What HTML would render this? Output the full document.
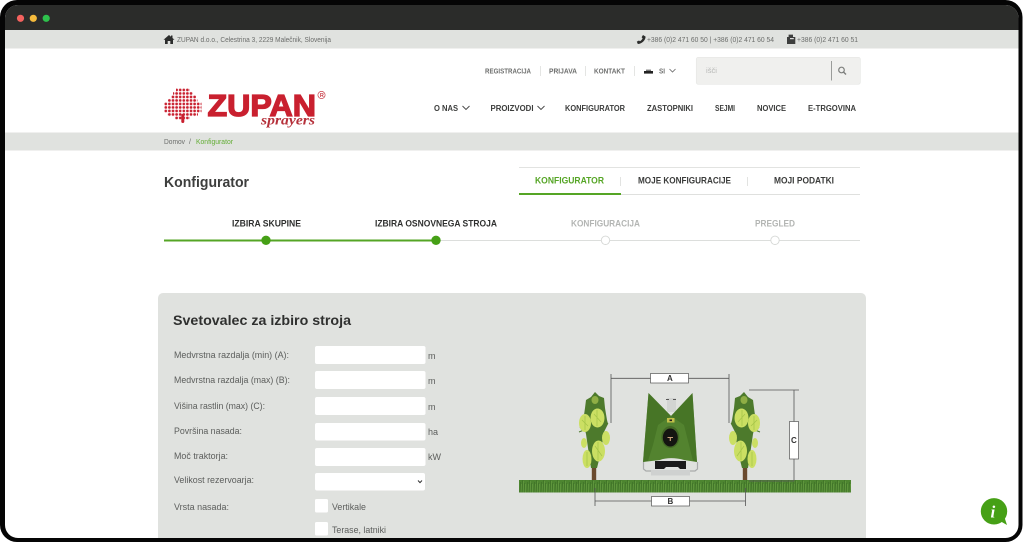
<!DOCTYPE html>
<html lang="sl">
<head>
<meta charset="utf-8">
<title>Konfigurator</title>
<style>
html,body{margin:0;padding:0;width:1024px;height:543px;overflow:hidden;background:#fff}
svg{display:block;filter:blur(.3px)}
text{font-family:"Liberation Sans",sans-serif;white-space:pre}
.t{font-size:7px;fill:#6b6d6b}
.n{font-size:7px;font-weight:bold;fill:#6e6f6e}
.m{font-size:8px;font-weight:bold;fill:#3c3d3c}
.tab{font-size:9px;font-weight:bold;fill:#3a3b3a}
.st{font-size:9px;font-weight:bold;fill:#2f302f}
.off{fill:#b3b5b3}
.l{font-size:9px;fill:#5c5e5c}
.in{fill:#fff}
</style>
</head>
<body>
<svg width="1024" height="543" viewBox="0 0 1024 543" xmlns="http://www.w3.org/2000/svg">
<defs>
<pattern id="d" x="164" y="88.2" width="3.6" height="3.5" patternUnits="userSpaceOnUse"><circle cx="1.8" cy="1.75" r="1.35" fill="#c9202f"/></pattern>
<pattern id="grass" x="519" y="479" width="7" height="14" patternUnits="userSpaceOnUse">
<rect width="7" height="14" fill="#4d8530"/>
<path d="M1 14L1.5 3M3 14L3.5 1M5 14L5.5 4" stroke="#3d6f26" stroke-width=".7"/>
<path d="M2 14L2.3 5M4.2 14L4.5 2M6.3 14L6.5 5" stroke="#69a044" stroke-width=".6"/>
</pattern>
<clipPath id="screen"><rect x="5" y="5" width="1013.5" height="533" rx="13"/></clipPath>
<g id="tree">
<rect x="-2.2" y="70" width="4.4" height="18" fill="#6a4a2e"/>
<path d="M1 0L5 4L10 6L11 16L13 28L14 32L10 40L7 60L3 76H-3L-6 56L-8 42L-11 30L-9 16L-8 8L-3 5Z" fill="#4d7a2c"/>
<path d="M-14 36L-8 30M14 32L9 26M-15 40L-10 38" stroke="#4d7a2c" stroke-width="1"/>
<ellipse cx="1" cy="8" rx="3.5" ry="4" fill="#8fae45"/>
<ellipse cx="-9" cy="31" rx="6" ry="9" fill="#cbdf63"/>
<ellipse cx="3.5" cy="26" rx="7" ry="9.5" fill="#cbdf63"/>
<ellipse cx="12" cy="46" rx="4" ry="7" fill="#cbdf63"/>
<ellipse cx="-10" cy="51" rx="3" ry="5" fill="#cbdf63"/>
<ellipse cx="4.5" cy="59" rx="6.5" ry="10.5" fill="#cbdf63"/>
<ellipse cx="-7" cy="67" rx="4.5" ry="9" fill="#cbdf63"/>
<path d="M-9 24V38M-12 28L-6 34M3 18V34M0 22L7 30M4 50V68M1 54L8 64M-7 60V74" stroke="#a7c64a" stroke-width=".8" fill="none"/>
</g>
</defs>

<!-- frame -->
<rect x="0" y="0" width="1022.5" height="542" rx="17" fill="#050505"/>
<g clip-path="url(#screen)">
<rect x="0" y="0" width="1024" height="543" fill="#fff"/>
<rect x="0" y="5" width="1024" height="25" fill="#2b2c2a"/>
<circle cx="20.5" cy="18.3" r="3.6" fill="#f4625e"/>
<circle cx="33.3" cy="18.3" r="3.6" fill="#f6bb3c"/>
<circle cx="46.2" cy="18.3" r="3.6" fill="#2ec24c"/>

<!-- top info bar -->
<rect x="0" y="30" width="1024" height="18.5" fill="#e0e2df"/>
<path d="M163.5 39.8L169 35L171 36.7V35.5H172.5V38L174.5 39.8H173V44H170.3V41H167.7V44H165V39.8Z" fill="#2c2d2c"/>
<text class="t" x="177" y="42" textLength="154" lengthAdjust="spacingAndGlyphs">ZUPAN d.o.o., Celestrina 3, 2229 Malečnik, Slovenija</text>
<path d="M643 35L645.6 36.6C645.6 40.4 641.5 44 637.8 44L636.8 41.6L639 40.5L640 41.3C641.2 40.6 642.2 39.4 642.6 38.3L641.6 37.2Z" fill="#2c2d2c"/>
<text class="t" x="647" y="42" textLength="127" lengthAdjust="spacingAndGlyphs">+386 (0)2 471 60 50 | +386 (0)2 471 60 54</text>
<path d="M787 37H788.6V34.6H793V37H795.3V44H787Z" fill="#3d3e3d"/>
<rect x="790" y="38" width="3.8" height="1.2" fill="#ddd"/>
<text class="t" x="797" y="42" textLength="61" lengthAdjust="spacingAndGlyphs">+386 (0)2 471 60 51</text>

<!-- top links -->
<text class="n" x="485" y="73.5" textLength="46" lengthAdjust="spacingAndGlyphs">REGISTRACIJA</text>
<rect x="540" y="66" width="1" height="10" fill="#e4e5e3"/>
<text class="n" x="549" y="73.5" textLength="28" lengthAdjust="spacingAndGlyphs">PRIJAVA</text>
<rect x="585" y="66" width="1" height="10" fill="#e4e5e3"/>
<text class="n" x="594" y="73.5" textLength="31" lengthAdjust="spacingAndGlyphs">KONTAKT</text>
<rect x="634" y="66" width="1" height="10" fill="#e4e5e3"/>
<rect x="644" y="71" width="9" height="2.6" fill="#222"/>
<rect x="646" y="69.6" width="5" height="1.4" fill="#777"/>
<text class="n" x="659" y="73.5" textLength="6" lengthAdjust="spacingAndGlyphs">SI</text>
<path d="M669.5 69L672.5 72L675.5 69" fill="none" stroke="#666" stroke-width=".8"/>

<!-- search -->
<rect x="696.3" y="57.3" width="164" height="27" rx="2" fill="#f0f0ee" stroke="#e6e7e5" stroke-width=".7"/>
<text x="706" y="73" font-size="7" fill="#b8b9b7" textLength="11" lengthAdjust="spacingAndGlyphs">išči</text>
<rect x="831" y="61" width="1" height="19.5" fill="#9a9c9a"/>
<circle cx="841.5" cy="70" r="2.8" fill="none" stroke="#7c7e7c" stroke-width="1.2"/>
<path d="M843.6 72.1L846 74.5" stroke="#7c7e7c" stroke-width="1.4"/>

<!-- logo -->
<path d="M176 88.2H190V91.7H193V95.2H196V98.7H197.5V102.2H201.5V112.7H198V116.2H190V119.7H175V116.2H167V112.7H164V102.2H168V98.7H171V95.2H173V91.7H176Z" fill="url(#d)"/>
<rect x="181.3" y="114" width="3" height="9" rx="1.2" fill="#c9202f"/>
<text x="207.5" y="116" font-size="31" font-weight="bold" fill="#c9202f" stroke="#c9202f" stroke-width="1.3" textLength="108.5" lengthAdjust="spacingAndGlyphs">ZUPAN</text>
<text x="261" y="124.5" font-size="13.5" font-weight="bold" font-style="italic" fill="#b5303a" style="font-family:'Liberation Serif',serif" textLength="54" lengthAdjust="spacingAndGlyphs">sprayers</text>
<circle cx="321.5" cy="95" r="3.6" fill="none" stroke="#c9404a" stroke-width=".7"/>
<text x="319.9" y="97.2" font-size="5.5" font-weight="bold" fill="#c9404a">R</text>

<!-- main nav -->
<text class="m" x="434" y="111" textLength="24" lengthAdjust="spacingAndGlyphs">O NAS</text>
<path d="M462.5 106L466 109.5L469.5 106" fill="none" stroke="#444" stroke-width=".9"/>
<text class="m" x="490.5" y="111" textLength="43" lengthAdjust="spacingAndGlyphs">PROIZVODI</text>
<path d="M537.5 106L541 109.5L544.5 106" fill="none" stroke="#444" stroke-width=".9"/>
<text class="m" x="565" y="111" textLength="60" lengthAdjust="spacingAndGlyphs">KONFIGURATOR</text>
<text class="m" x="647" y="111" textLength="46" lengthAdjust="spacingAndGlyphs">ZASTOPNIKI</text>
<text class="m" x="715" y="111" textLength="20" lengthAdjust="spacingAndGlyphs">SEJMI</text>
<text class="m" x="757" y="111" textLength="29" lengthAdjust="spacingAndGlyphs">NOVICE</text>
<text class="m" x="808" y="111" textLength="48" lengthAdjust="spacingAndGlyphs">E-TRGOVINA</text>

<!-- breadcrumb -->
<rect x="0" y="132.5" width="1024" height="18" fill="#e0e2df"/>
<text class="t" x="164" y="144" textLength="21" lengthAdjust="spacingAndGlyphs">Domov</text>
<text class="t" x="189" y="144">/</text>
<text x="196" y="144" font-size="7" fill="#63ad35" textLength="37" lengthAdjust="spacingAndGlyphs">Konfigurator</text>

<!-- title + tabs -->
<text x="164" y="187" font-size="14.5" font-weight="bold" fill="#3d3e3d" textLength="85" lengthAdjust="spacingAndGlyphs">Konfigurator</text>
<rect x="519" y="167" width="341" height="1" fill="#e2e3e1"/>
<rect x="519" y="194" width="341" height="1" fill="#dfe0de"/>
<rect x="519" y="193" width="102" height="2" fill="#55a525"/>
<text class="tab" x="535" y="183.5" style="fill:#55a525" textLength="69" lengthAdjust="spacingAndGlyphs">KONFIGURATOR</text>
<rect x="620" y="177" width="1" height="9" fill="#e2e3e1"/>
<text class="tab" x="638" y="183.5" textLength="93" lengthAdjust="spacingAndGlyphs">MOJE KONFIGURACIJE</text>
<rect x="747" y="177" width="1" height="9" fill="#e2e3e1"/>
<text class="tab" x="774" y="183.5" textLength="60" lengthAdjust="spacingAndGlyphs">MOJI PODATKI</text>

<!-- steps -->
<text class="st" x="232" y="226.3" textLength="69" lengthAdjust="spacingAndGlyphs">IZBIRA SKUPINE</text>
<text class="st" x="375" y="226.3" textLength="122" lengthAdjust="spacingAndGlyphs">IZBIRA OSNOVNEGA STROJA</text>
<text class="st off" x="571" y="226.3" textLength="69" lengthAdjust="spacingAndGlyphs">KONFIGURACIJA</text>
<text class="st off" x="755" y="226.3" textLength="40" lengthAdjust="spacingAndGlyphs">PREGLED</text>
<rect x="436" y="240" width="424" height="1" fill="#dcdedc"/>
<rect x="164" y="239.5" width="272" height="2" fill="#55a525"/>
<circle cx="266" cy="240.3" r="4.7" fill="#46a016"/>
<circle cx="436" cy="240.3" r="4.7" fill="#46a016"/>
<circle cx="605.5" cy="240.3" r="4.2" fill="#fff" stroke="#d5d7d5" stroke-width=".9"/>
<circle cx="775" cy="240.3" r="4.2" fill="#fff" stroke="#d5d7d5" stroke-width=".9"/>

<!-- panel -->
<rect x="158" y="293" width="708" height="260" rx="5" fill="#e0e2df"/>
<text x="173" y="325" font-size="14" font-weight="bold" fill="#2f302f" textLength="178" lengthAdjust="spacingAndGlyphs">Svetovalec za izbiro stroja</text>

<text class="l" x="174" y="358" textLength="115" lengthAdjust="spacingAndGlyphs">Medvrstna razdalja (min) (A):</text>
<text class="l" x="174" y="383" textLength="116" lengthAdjust="spacingAndGlyphs">Medvrstna razdalja (max) (B):</text>
<text class="l" x="174" y="409" textLength="91" lengthAdjust="spacingAndGlyphs">Višina rastlin (max) (C):</text>
<text class="l" x="174" y="434" textLength="68" lengthAdjust="spacingAndGlyphs">Površina nasada:</text>
<text class="l" x="174" y="459" textLength="54" lengthAdjust="spacingAndGlyphs">Moč traktorja:</text>
<text class="l" x="174" y="483" textLength="80" lengthAdjust="spacingAndGlyphs">Velikost rezervoarja:</text>
<text class="l" x="174" y="510" textLength="55" lengthAdjust="spacingAndGlyphs">Vrsta nasada:</text>

<rect class="in" x="315" y="346" width="110.5" height="18" rx="2"/>
<rect class="in" x="315" y="371" width="110.5" height="18" rx="2"/>
<rect class="in" x="315" y="397" width="110.5" height="18" rx="2"/>
<rect class="in" x="315" y="423" width="110.5" height="17.5" rx="2"/>
<rect class="in" x="315" y="448" width="110.5" height="18" rx="2"/>
<rect class="in" x="315" y="473" width="110" height="17.5" rx="2"/>
<path d="M418 480.5L420 482.6L422 480.5" fill="none" stroke="#333" stroke-width="1"/>
<text class="l" x="428" y="359">m</text>
<text class="l" x="428" y="384">m</text>
<text class="l" x="428" y="410">m</text>
<text class="l" x="428" y="435">ha</text>
<text class="l" x="428" y="460">kW</text>

<rect class="in" x="315" y="499" width="13" height="13.5" rx="1.5"/>
<rect class="in" x="315" y="522" width="13" height="13.5" rx="1.5"/>
<text class="l" x="332" y="510" textLength="34" lengthAdjust="spacingAndGlyphs">Vertikale</text>
<text class="l" x="332" y="533" textLength="54" lengthAdjust="spacingAndGlyphs">Terase, latniki</text>

<!-- diagram -->
<rect x="519" y="480" width="332" height="12.5" fill="url(#grass)"/>
<use href="#tree" x="594" y="392"/>
<g transform="translate(745,392) scale(-1,1)"><use href="#tree"/></g>

<g stroke="#555" stroke-width=".8" fill="none">
<path d="M611 374V423M729 374V423M611 378.3H729"/>
<path d="M595 488V506M745.5 488V506M595 501H745.5"/>
<path d="M749 390H799M794 390V481M749 481H794"/>
</g>
<rect x="650.5" y="373.5" width="38" height="9.5" fill="#fff" stroke="#555" stroke-width=".7"/>
<text x="667" y="381" font-size="8" font-weight="bold" fill="#333">A</text>
<rect x="651.5" y="496.5" width="38" height="9.5" fill="#fff" stroke="#555" stroke-width=".7"/>
<text x="667.5" y="504" font-size="8" font-weight="bold" fill="#333">B</text>
<rect x="789.5" y="421.5" width="9" height="37.5" fill="#fff" stroke="#555" stroke-width=".7"/>
<text x="791" y="443" font-size="8" font-weight="bold" fill="#333">C</text>

<!-- sprayer -->
<path d="M643.5 462V469L646 471H695L697.5 469V462" fill="none" stroke="#a9abab" stroke-width="1.2"/>
<rect x="651" y="470" width="39" height="5.5" fill="#cfd1d0"/>
<path d="M655 461H686V469H680L678 467H666L664 469H655Z" fill="#1b1b1b"/>
<rect x="667" y="398" width="9" height="14" fill="#d2d4d2"/>
<rect x="666" y="399" width="3" height="1" fill="#555"/><rect x="673" y="399" width="3" height="1" fill="#555"/>
<path d="M648.5 393L671 416L692.5 393L697 462L684 460C676 457.5 666 457.5 660 460L643 462Z" fill="#53832f"/>
<path d="M648.5 393L671 416L658 425L653 445L648 461L643 462Z" fill="#3f6d22" opacity=".6"/>
<path d="M692.5 393L671 416L684 425L689 445L693 461L697 462Z" fill="#3f6d22" opacity=".6"/>
<rect x="667" y="418" width="7.5" height="4.5" fill="#c3c04a"/>
<rect x="669.5" y="419.5" width="2.5" height="1.6" fill="#222"/>
<ellipse cx="670.3" cy="437" rx="9" ry="11" fill="#3a5a22" opacity=".6"/>
<ellipse cx="670.3" cy="437.5" rx="7.5" ry="9" fill="#141511"/>
<rect x="667.5" y="437" width="5.5" height="1" fill="#c9a079"/>
<rect x="669.7" y="437" width="1.2" height="4" fill="#c9a079"/>

<!-- info bubble -->
<circle cx="994" cy="511.3" r="13.2" fill="#46a016"/>
<path d="M1000 521L1007 525L1004 516Z" fill="#46a016"/>
<text x="990.5" y="517.5" font-size="17" font-weight="bold" font-style="italic" fill="#fff" style="font-family:'Liberation Serif',serif">i</text>
</g>
</svg>
</body>
</html>
